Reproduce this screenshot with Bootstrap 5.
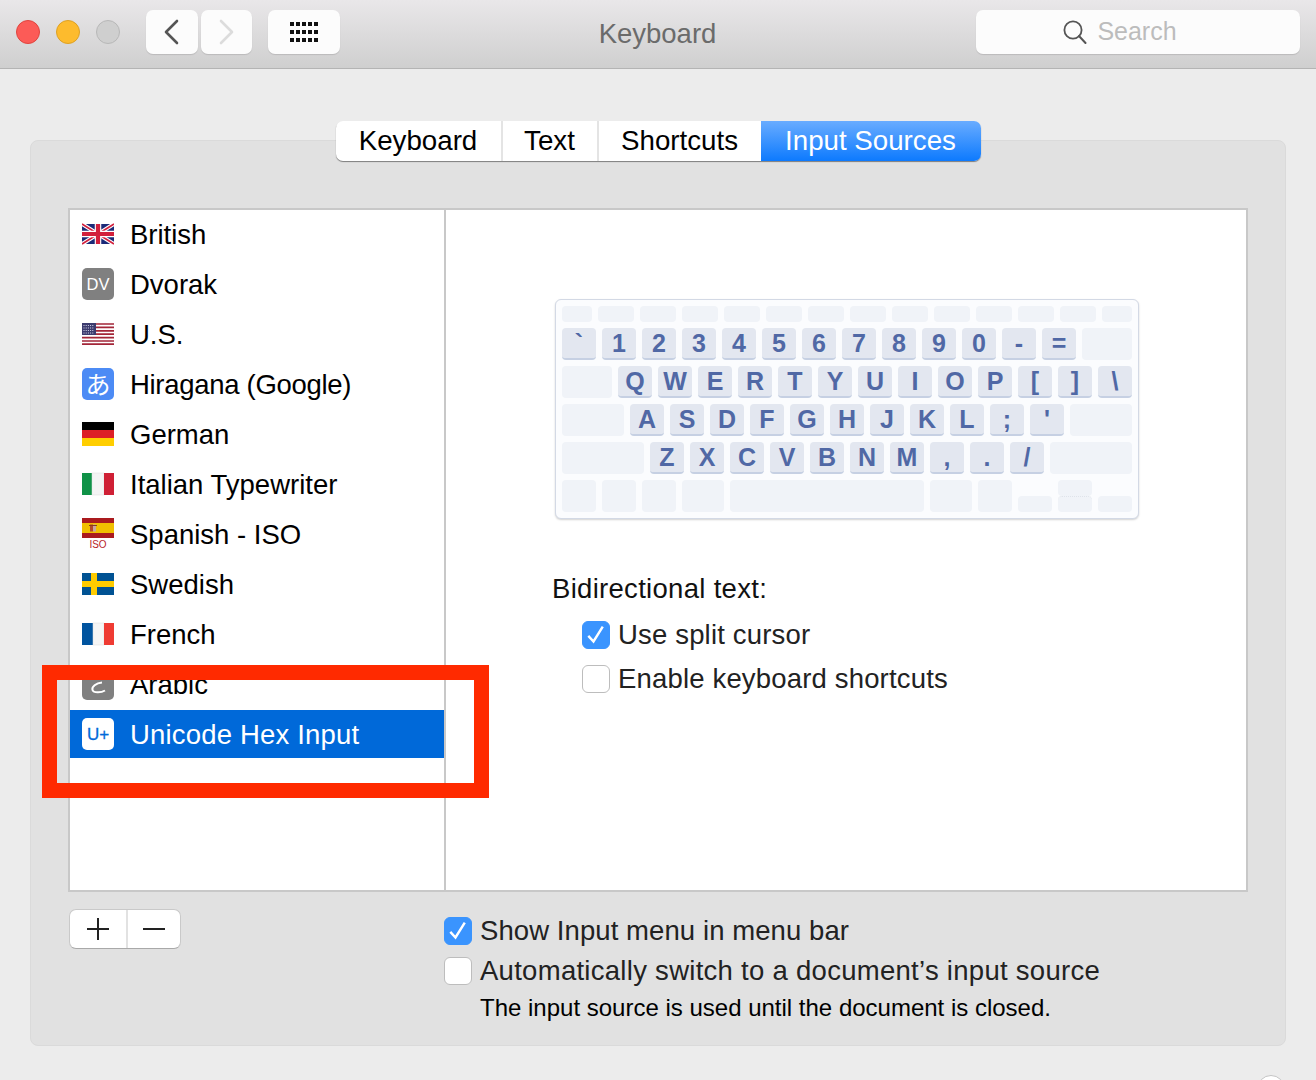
<!DOCTYPE html>
<html lang="en">
<head>
  <meta charset="UTF-8">
  <meta name="viewport" content="width=device-width, initial-scale=1">
  <title>Keyboard</title>
  <link rel="stylesheet" href="https://cdn.jsdelivr.net/npm/bootstrap@5.3.0/dist/css/bootstrap.min.css">
  <style>
    html, body { height: 1080px; overflow: hidden; }
    body {
      position: relative;
      background: #ececec;
      font-family: "Liberation Sans", Arial, sans-serif;
      font-size: 27.5px;
      color: #111;
    }
    /* title bar */
    .titlebar {
      height: 69px;
      padding: 0 16px;
      background: linear-gradient(#e9e7e9, #cfcfcf);
      border-bottom: 1px solid #b4b4b4;
    }
    .light { width: 24px; height: 24px; border-radius: 50%; flex: none; margin-bottom: 4px; }
    .light-red { background: #fc5b57; border: 1px solid #e0443e; }
    .light-amber { background: #fdbb2d; border: 1px solid #dea123; }
    .light-off { background: #cfcfcf; border: 1px solid #b8b8b8; }
    .lights { gap: 16px; width: 130px; }
    .bar-btn {
      height: 44px;
      margin-bottom: 4px;
      background: #fcfcfc;
      border-radius: 7px;
      box-shadow: 0 1px 1px rgba(0,0,0,.12);
    }
    .bar-back { width: 52px; padding-right: 2px; }
    .bar-forward { width: 51px; margin-left: 3px; }
    .bar-grid { width: 72px; margin-left: 16px; }
    .bar-title { flex: 1; text-align: center; color: #6b6b6b; font-size: 27.5px; margin-left: -1px; }
    .bar-search { width: 324px; gap: 10px; padding-right: 36px; color: #bcbcbc; font-size: 25px; }
    /* panel */
    .panel-box {
      margin: 71px 30px 0;
      height: 906px;
      padding: 0 37px;
      background: #e1e1e1;
      border: 1px solid #dadada;
      border-radius: 8px;
    }
    .tab-strip {
      margin: -20px auto 47px;
      width: 645px;
      height: 40px;
      font-size: 27.7px;
      background: #fff;
      border-radius: 7px;
      box-shadow: 0 1px 1px rgba(0,0,0,.45);
      overflow: hidden;
    }
    .tab-item { border-right: 2px solid #e4e4e4; color: #000; }
    .tab-keyboard { width: 167px; }
    .tab-text { width: 96px; }
    .tab-shortcuts { width: 162px; border-right: 0; }
    .tab-input { width: 220px; border-right: 0; color: #fff; background: linear-gradient(#69acff, #0d7afe); }
    /* list + detail */
    .source-box { height: 684px; background: #fff; border: 2px solid #c8c8c8; }
    .source-list { width: 376px; flex: none; border-right: 2px solid #c8c8c8; }
    .source-row { height: 50px; padding-left: 12px; gap: 16px; color: #000; }
    .source-row svg, .src-badge { width: 32px; height: 32px; flex: none; margin-bottom: 2px; }
    .src-badge { border-radius: 5px; color: #fff; font-size: 17px; line-height: 33px; text-align: center; }
    .src-gray { background: #808080; font-size: 16.5px; }
    .src-blue { background: #4c8bf5; font-family: "Noto Sans CJK JP", sans-serif; font-size: 25px; line-height: 30px; }
    .src-white { background: #fff; color: #0069d9; font-size: 17px; -webkit-text-stroke: .3px #0069d9; }
    .source-row-on { height: 48px; background: #0069d9; color: #fff; }
    .source-row-on .src-badge { margin-bottom: 0; }
    .source-row-on .src-name { padding-top: 2px; letter-spacing: .18px; }
    .src-hiragana { letter-spacing: -.3px; }
    .detail-pane { padding: 89px 0 0 106px; }
    /* keyboard picture */
    .kb-shell {
      width: 584px;
      height: 220px;
      margin-left: 3px;
      padding: 6px;
      gap: 6px;
      background: #fbfcfe;
      border: 1px solid #d3d9e5;
      border-radius: 6px;
      box-shadow: 0 1px 2px rgba(0,0,0,.18);
    }
    .kb-row { height: 32px; gap: 6px; }
    .kb-row-fn { height: 16px; }
    .kb-row-low { align-items: flex-end; }
    .kb-key {
      height: 32px;
      flex: none;
      border-radius: 4px;
      background: #e3e7f0;
      border-bottom: 2px solid #c6d0e3;
      color: #5068a5;
      font-weight: 700;
      font-size: 25px;
      line-height: 30px;
      text-align: center;
    }
    .kb-blank { background: #f0f3f8; border-bottom: 0; }
    .kb-fn { height: 16px; }
    .kb-stack { flex: none; }
    .kb-stack .kb-key + .kb-key { border-top: 1px dotted #dfe3ea; }
    /* checks */
    .check-row { gap: 8px; }
    .check-row .form-check-input {
      width: 28px;
      height: 28px;
      margin: 0;
      flex: none;
      border-radius: 6px;
      border: 1px solid #bdbdbd;
      background-color: #fff;
      opacity: 1;
    }
    .check-row .form-check-input:checked {
      background-color: #3a94fe;
      border-color: #3a94fe;
      background-image: url("data:image/svg+xml,%3csvg xmlns='http://www.w3.org/2000/svg' viewBox='0 0 28 28'%3e%3cpath d='M5.7 15l5.6 6L21.3 5' fill='none' stroke='%23fff' stroke-width='2.6'/%3e%3c/svg%3e");
    }
    .bidi-title { margin: 54px 0 0; line-height: 32px; letter-spacing: .3px; }
    .bidi-options { margin: 16px 0 0 30px; gap: 16px; color: #222; line-height: 28px; letter-spacing: .17px; }
    /* bottom strip */
    .footer-strip { padding-top: 17px; }
    .plus-minus {
      width: 112px;
      height: 40px;
      margin-left: 1px;
      flex: none;
      background: #fff;
      border: 1px solid #c9c9c9;
      border-bottom-color: #a9a9a9;
      border-radius: 7px;
    }
    .pm-cell { width: 56px; flex: none; }
    .pm-cell + .pm-cell { flex: 1; width: auto; border-left: 2px solid #e2e2e2; }
    .footer-checks { margin: 8px 0 0 263px; gap: 12px; color: #222; line-height: 28px; letter-spacing: .08px; }
    .label-wide { letter-spacing: .28px; }
    .footer-note { margin: -3px 0 0 36px; font-size: 24px; letter-spacing: 0; color: #000; line-height: 28px; }
    .help-wrap { padding: 29px 31px 0 0; }
    .help-dot { width: 28px; height: 28px; border-radius: 50%; background: #fff; border: 1px solid #c4c4c4; }
    /* annotation drawn over the screenshot */
    .red-frame {
      position: absolute;
      left: 42px;
      top: 665px;
      width: 447px;
      height: 133px;
      border: 15px solid #ff2a00;
      pointer-events: none;
    }
  </style>
</head>
<body>

  <!-- TITLE BAR -->
  <header class="titlebar d-flex align-items-center">
    <div class="lights d-flex">
      <span class="light light-red"></span>
      <span class="light light-amber"></span>
      <span class="light light-off"></span>
    </div>
    <div class="bar-btn bar-back d-flex align-items-center justify-content-center">
      <svg width="16" height="26" viewBox="0 0 16 26"><path d="M14 2 3 13l11 11" fill="none" stroke="#555" stroke-width="2.6" stroke-linecap="round" stroke-linejoin="round"/></svg>
    </div>
    <div class="bar-btn bar-forward d-flex align-items-center justify-content-center">
      <svg width="16" height="26" viewBox="0 0 16 26"><path d="M2 2l11 11L2 24" fill="none" stroke="#dcdcdc" stroke-width="2.6" stroke-linecap="round" stroke-linejoin="round"/></svg>
    </div>
    <div class="bar-btn bar-grid d-flex align-items-center justify-content-center">
      <svg width="30" height="20" viewBox="0 0 30 20" fill="#111">
        <g id="gridRow"><rect x="1" y="0" width="4" height="4"/><rect x="7" y="0" width="4" height="4"/><rect x="13" y="0" width="4" height="4"/><rect x="19" y="0" width="4" height="4"/><rect x="25" y="0" width="4" height="4"/></g>
        <use href="#gridRow" y="8"/><use href="#gridRow" y="16"/>
      </svg>
    </div>
    <div class="bar-title">Keyboard</div>
    <div class="bar-btn bar-search d-flex align-items-center justify-content-center">
      <svg width="24" height="24" viewBox="0 0 24 24"><circle cx="10" cy="10" r="8.6" fill="none" stroke="#555" stroke-width="1.8"/><path d="M16 16l6.5 7" stroke="#555" stroke-width="2" stroke-linecap="round"/></svg>
      <span>Search</span>
    </div>
  </header>

  <!-- PREFERENCES PANEL -->
  <main class="panel-box">
    <div class="tab-strip d-flex">
      <div class="tab-item tab-keyboard d-flex align-items-center justify-content-center">Keyboard</div>
      <div class="tab-item tab-text d-flex align-items-center justify-content-center">Text</div>
      <div class="tab-item tab-shortcuts d-flex align-items-center justify-content-center">Shortcuts</div>
      <div class="tab-item tab-input d-flex align-items-center justify-content-center">Input Sources</div>
    </div>

    <div class="source-box d-flex">
      <div class="source-list">
        <div class="source-row d-flex align-items-center">
          <svg viewBox="0 0 32 32">
            <rect x="0" y="6" width="32" height="20" fill="#1b2a78"/>
            <path d="M0 6 32 26M32 6 0 26" stroke="#fff" stroke-width="4"/>
            <path d="M0 6 32 26M32 6 0 26" stroke="#d21f3c" stroke-width="1.6"/>
            <path d="M16 6v20M0 16h32" stroke="#fff" stroke-width="6.5"/>
            <path d="M16 6v20M0 16h32" stroke="#d21f3c" stroke-width="4.2"/>
          </svg>
          <span>British</span>
        </div>
        <div class="source-row d-flex align-items-center">
          <span class="src-badge src-gray">DV</span>
          <span>Dvorak</span>
        </div>
        <div class="source-row d-flex align-items-center">
          <svg viewBox="0 0 32 32">
            <rect x="0" y="5" width="32" height="22" fill="#fff"/>
            <path d="M0 6h32M0 9.4h32M0 12.8h32M0 16.2h32M0 19.6h32M0 23h32M0 26.2h32" stroke="#a32638" stroke-width="1.7"/>
            <rect x="0" y="5" width="14" height="12" fill="#3c3b6e"/>
            <path d="M1.5 7.5h11M1.5 10h11M1.5 12.5h11M1.5 15h11" stroke="#d8d8ea" stroke-width="1" stroke-dasharray="1 1.2"/>
          </svg>
          <span>U.S.</span>
        </div>
        <div class="source-row d-flex align-items-center">
          <span class="src-badge src-blue">あ</span>
          <span class="src-hiragana">Hiragana (Google)</span>
        </div>
        <div class="source-row d-flex align-items-center">
          <svg viewBox="0 0 32 32">
            <rect x="0" y="4" width="32" height="8" fill="#000"/>
            <rect x="0" y="12" width="32" height="8" fill="#dd1f26"/>
            <rect x="0" y="20" width="32" height="8" fill="#ffce00"/>
          </svg>
          <span>German</span>
        </div>
        <div class="source-row d-flex align-items-center">
          <svg viewBox="0 0 32 32">
            <rect x="0" y="5" width="10" height="22" fill="#0f9247"/>
            <rect x="10" y="5" width="12" height="22" fill="#f4f4f4" stroke="#ddd" stroke-width=".5"/>
            <rect x="22" y="5" width="10" height="22" fill="#cf2035"/>
          </svg>
          <span>Italian Typewriter</span>
        </div>
        <div class="source-row d-flex align-items-center">
          <svg viewBox="0 0 32 32">
            <rect x="0" y="0" width="32" height="20" fill="#aa1a1e"/>
            <rect x="0" y="5" width="32" height="10" fill="#f1bf00"/>
            <rect x="8" y="6.5" width="3" height="7" fill="#b5482a"/>
            <rect x="11" y="6.5" width="3" height="7" fill="#c9a6a0"/>
            <path d="M7 7.5h8" stroke="#8a3a20" stroke-width="1"/>
            <text x="16" y="30" text-anchor="middle" font-family="Liberation Sans, sans-serif" font-size="10" fill="#b8232a">ISO</text>
          </svg>
          <span>Spanish - ISO</span>
        </div>
        <div class="source-row d-flex align-items-center">
          <svg viewBox="0 0 32 32">
            <rect x="0" y="5" width="32" height="22" fill="#005293"/>
            <path d="M0 16h32M12 5v22" stroke="#fecb00" stroke-width="6"/>
          </svg>
          <span>Swedish</span>
        </div>
        <div class="source-row d-flex align-items-center">
          <svg viewBox="0 0 32 32">
            <rect x="0" y="5" width="11" height="22" fill="#00549f"/>
            <rect x="11" y="5" width="11" height="22" fill="#f5f5f5" stroke="#ddd" stroke-width=".5"/>
            <rect x="22" y="5" width="10" height="22" fill="#ef3b33"/>
          </svg>
          <span>French</span>
        </div>
        <div class="source-row d-flex align-items-center">
          <svg viewBox="0 0 32 32">
            <rect width="32" height="32" rx="5" fill="#808080"/>
            <path d="M20 14.5C14 15 9.5 19 10.5 22 11.5 25 19 25 23 22.5" fill="none" stroke="#fff" stroke-width="2"/>
          </svg>
          <span>Arabic</span>
        </div>
        <div class="source-row source-row-on d-flex align-items-center">
          <span class="src-badge src-white">U+</span>
          <span class="src-name">Unicode Hex Input</span>
        </div>
      </div>

      <div class="detail-pane flex-grow-1">
        <div id="kbShell" class="kb-shell d-flex flex-column"></div>
        <p class="bidi-title">Bidirectional text:</p>
        <div class="bidi-options d-flex flex-column">
          <label class="check-row d-flex align-items-center">
            <input class="form-check-input" type="checkbox" checked>
            <span>Use split cursor</span>
          </label>
          <label class="check-row d-flex align-items-center">
            <input class="form-check-input" type="checkbox">
            <span>Enable keyboard shortcuts</span>
          </label>
        </div>
      </div>
    </div>

    <div class="footer-strip d-flex">
      <div class="plus-minus d-flex">
        <div class="pm-cell d-flex align-items-center justify-content-center">
          <svg width="24" height="24" viewBox="0 0 24 24"><path d="M12 1v22M1 12h22" stroke="#222" stroke-width="2"/></svg>
        </div>
        <div class="pm-cell d-flex align-items-center justify-content-center">
          <svg width="24" height="24" viewBox="0 0 24 24"><path d="M1 12h22" stroke="#222" stroke-width="2"/></svg>
        </div>
      </div>
      <div class="footer-checks d-flex flex-column">
        <label class="check-row d-flex align-items-center">
          <input class="form-check-input" type="checkbox" checked>
          <span>Show Input menu in menu bar</span>
        </label>
        <label class="check-row d-flex align-items-center">
          <input class="form-check-input" type="checkbox">
          <span class="label-wide">Automatically switch to a document’s input source</span>
        </label>
        <div class="footer-note">The input source is used until the document is closed.</div>
      </div>
    </div>
  </main>

  <div class="help-wrap d-flex justify-content-end">
    <span class="help-dot"></span>
  </div>

  <div class="red-frame"></div>

  <script>
    // Keyboard rows: [label, width]; an empty label is a dimmed key
    const num = "`1234567890-=".split("").map(c => [c, 34]);
    const rows = [
      { cls: "kb-row-fn", fn: true, keys: [30, 36, 36, 36, 36, 36, 36, 36, 36, 36, 36, 36, 36, 30].map(w => ["", w]) },
      { keys: [...num, ["", 50]] },
      { keys: [["", 50], ..."QWERTYUIOP[]\\".split("").map(c => [c, 34])] },
      { keys: [["", 62], ..."ASDFGHJKL;'".split("").map(c => [c, 34]), ["", 62]] },
      { keys: [["", 82], ..."ZXCVBNM,./".split("").map(c => [c, 34]), ["", 82]] }
    ];

    const kbShell = document.getElementById("kbShell");

    function makeKey(label, width, extra) {
      const key = document.createElement("div");
      key.className = "kb-key" + (label ? "" : " kb-blank") + (extra ? " " + extra : "");
      key.style.width = width + "px";
      key.textContent = label;
      return key;
    }

    rows.forEach(row => {
      const el = document.createElement("div");
      el.className = "kb-row d-flex " + (row.cls || "");
      row.keys.forEach(k => el.appendChild(makeKey(k[0], k[1], row.fn ? "kb-fn" : "")));
      kbShell.appendChild(el);
    });

    // Bottom row with the arrow cluster
    const low = document.createElement("div");
    low.className = "kb-row kb-row-low d-flex";
    [34, 34, 34, 42, 194, 42, 34].forEach(w => low.appendChild(makeKey("", w)));
    low.appendChild(makeKey("", 34, "kb-fn"));
    const stack = document.createElement("div");
    stack.className = "kb-stack d-flex flex-column";
    stack.appendChild(makeKey("", 34, "kb-fn"));
    stack.appendChild(makeKey("", 34, "kb-fn"));
    low.appendChild(stack);
    low.appendChild(makeKey("", 34, "kb-fn"));
    kbShell.appendChild(low);
  </script>
</body>
</html>
